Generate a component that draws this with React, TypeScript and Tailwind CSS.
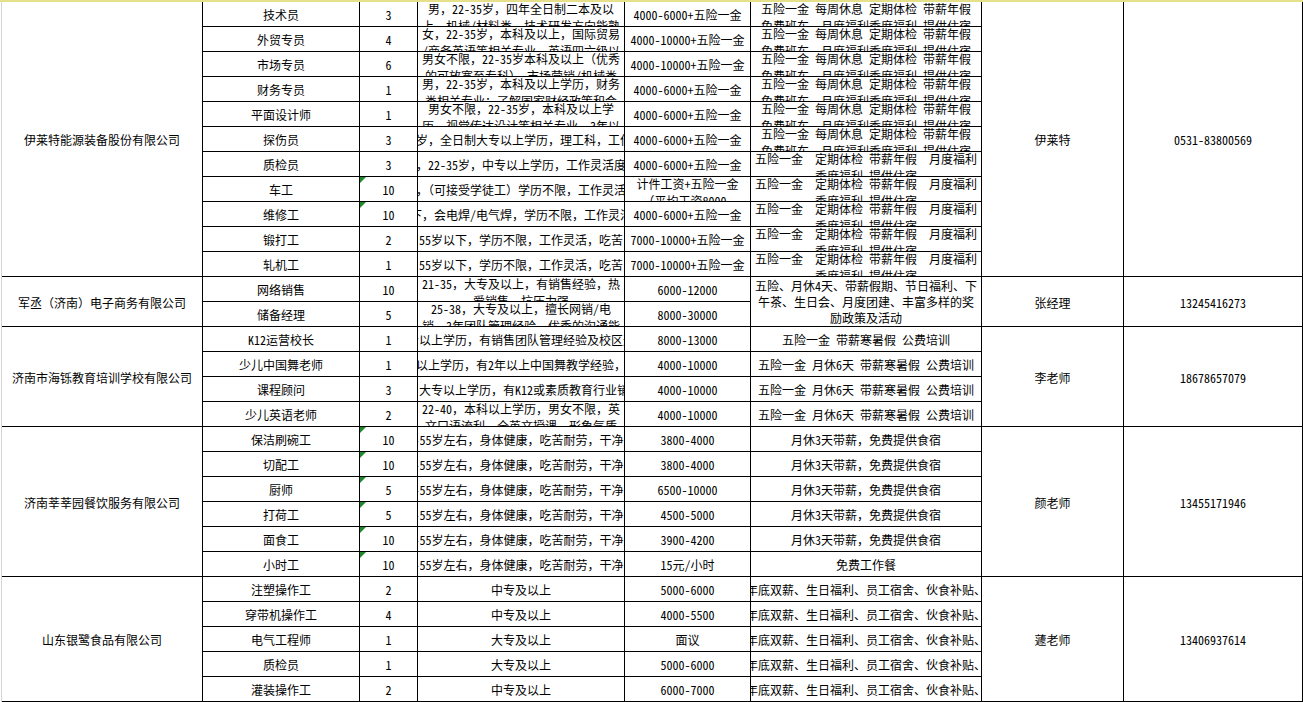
import React from "react"

type Cell =
  | string
  | { left: string }
  | { nudge: string }
  | { wrap: string[] }
  | { block: string[] }

interface Job {
  title: string
  count: string
  req: Cell
  salary: Cell
  benefit?: Cell
  mark?: boolean
}

interface Company {
  name: string
  contact: string
  phone: string
  benefit?: Cell
  jobs: Job[]
}

const SP = "\u2002"

const benefitA: Cell = {
  wrap: [`五险一金${SP}每周休息${SP}定期体检${SP}带薪年假`, `免费班车${SP}${SP}月度福利季度福利${SP}提供住宿`],
}
const benefitB: Cell = {
  wrap: [`五险一金${SP}${SP}定期体检${SP}带薪年假${SP}${SP}月度福利`, `季度福利${SP}提供住宿`],
}
const teach = `五险一金${SP}月休6天${SP}带薪寒暑假${SP}公费培训`
const food: Cell = { nudge: "18-55岁左右，身体健康，吃苦耐劳，干净卫生" }
const yinlu = "年底双薪、生日福利、员工宿舍、伙食补贴、"

const companies: Company[] = [
  {
    name: "伊莱特能源装备股份有限公司",
    contact: "伊莱特",
    phone: "0531-83800569",
    jobs: [
      { title: "技术员", count: "3", req: { wrap: ["男，22-35岁，四年全日制二本及以", "上，机械/材料类，技术研发方向能熟"] }, salary: "4000-6000+五险一金", benefit: benefitA },
      { title: "外贸专员", count: "4", req: { wrap: ["女，22-35岁，本科及以上，国际贸易", "/商务英语等相关专业，英语四六级以"] }, salary: "4000-10000+五险一金", benefit: benefitA },
      { title: "市场专员", count: "6", req: { wrap: ["男女不限，22-35岁本科及以上（优秀", "的可放宽至专科），市场营销/机械类"] }, salary: "4000-10000+五险一金", benefit: benefitA },
      { title: "财务专员", count: "1", req: { wrap: ["男，22-35岁，本科及以上学历，财务", "类相关专业；了解国家财经政策和会"] }, salary: "4000-6000+五险一金", benefit: benefitA },
      { title: "平面设计师", count: "1", req: { wrap: ["男女不限，22-35岁，本科及以上学", "历，视觉传达设计等相关专业，3年以"] }, salary: "4000-6000+五险一金", benefit: benefitA },
      { title: "探伤员", count: "3", req: "男，22-35岁，全日制大专以上学历，理工科，工作经验优先", salary: "4000-6000+五险一金", benefit: benefitA },
      { title: "质检员", count: "3", req: "男，22-35岁，中专以上学历，工作灵活度高", salary: "4000-6000+五险一金", benefit: benefitB },
      { title: "车工", count: "10", mark: true, req: "55岁以下，（可接受学徒工）学历不限，工作灵活，能吃苦", salary: { wrap: ["计件工资+五险一金", "（平均工资8000-"] }, benefit: benefitB },
      { title: "维修工", count: "10", mark: true, req: "55岁以下，会电焊/电气焊，学历不限，工作灵活，吃苦", salary: "4000-6000+五险一金", benefit: benefitB },
      { title: "锻打工", count: "2", req: "55岁以下，学历不限，工作灵活，吃苦", salary: "7000-10000+五险一金", benefit: benefitB },
      { title: "轧机工", count: "1", req: "55岁以下，学历不限，工作灵活，吃苦", salary: "7000-10000+五险一金", benefit: benefitB },
    ],
  },
  {
    name: "军丞（济南）电子商务有限公司",
    contact: "张经理",
    phone: "13245416273",
    benefit: { block: ["五险、月休4天、带薪假期、节日福利、下", "午茶、生日会、月度团建、丰富多样的奖", "励政策及活动"] },
    jobs: [
      { title: "网络销售", count: "10", req: { wrap: ["21-35，大专及以上，有销售经验，热", "爱销售，抗压力强"] }, salary: "6000-12000" },
      { title: "储备经理", count: "5", req: { wrap: ["25-38，大专及以上，擅长网销/电", "销，3年团队管理经验，优秀的沟通能"] }, salary: "8000-30000" },
    ],
  },
  {
    name: "济南市海铄教育培训学校有限公司",
    contact: "李老师",
    phone: "18678657079",
    jobs: [
      { title: "K12运营校长", count: "1", req: "大专以上学历，有销售团队管理经验及校区运营", salary: "8000-13000", benefit: `五险一金${SP}带薪寒暑假${SP}公费培训` },
      { title: "少儿中国舞老师", count: "1", req: "大专以上学历，有2年以上中国舞教学经验，优先", salary: "4000-10000", benefit: teach },
      { title: "课程顾问", count: "3", req: { left: "大专以上学历，有K12或素质教育行业销售经验" }, salary: "4000-10000", benefit: teach },
      { title: "少儿英语老师", count: "2", req: { wrap: ["22-40，本科以上学历，男女不限，英", "文口语流利，全英文授课，形象气质"] }, salary: "4000-10000", benefit: teach },
    ],
  },
  {
    name: "济南莘莘园餐饮服务有限公司",
    contact: "颜老师",
    phone: "13455171946",
    jobs: [
      { title: "保洁刷碗工", count: "10", mark: true, req: food, salary: "3800-4000", benefit: "月休3天带薪，免费提供食宿" },
      { title: "切配工", count: "10", mark: true, req: food, salary: "3800-4000", benefit: "月休3天带薪，免费提供食宿" },
      { title: "厨师", count: "5", mark: true, req: food, salary: "6500-10000", benefit: "月休3天带薪，免费提供食宿" },
      { title: "打荷工", count: "5", mark: true, req: food, salary: "4500-5000", benefit: "月休3天带薪，免费提供食宿" },
      { title: "面食工", count: "10", mark: true, req: food, salary: "3900-4200", benefit: "月休3天带薪，免费提供食宿" },
      { title: "小时工", count: "10", mark: true, req: food, salary: "15元/小时", benefit: "免费工作餐" },
    ],
  },
  {
    name: "山东银鹭食品有限公司",
    contact: "蘧老师",
    phone: "13406937614",
    jobs: [
      { title: "注塑操作工", count: "2", req: "中专及以上", salary: "5000-6000", benefit: yinlu },
      { title: "穿带机操作工", count: "4", req: "中专及以上", salary: "4000-5500", benefit: yinlu },
      { title: "电气工程师", count: "1", req: "大专及以上", salary: "面议", benefit: yinlu },
      { title: "质检员", count: "1", req: "大专及以上", salary: "5000-6000", benefit: yinlu },
      { title: "灌装操作工", count: "2", req: "中专及以上", salary: "6000-7000", benefit: yinlu },
    ],
  },
]

const SPAN: Record<number, string> = {
  1: "",
  2: "row-span-2",
  4: "row-span-4",
  5: "row-span-5",
  6: "row-span-6",
  11: "row-span-11",
}

const base = "relative overflow-hidden min-w-0 border-r border-b border-black"

// half-width latin like the sheet's SimSun, CJK punctuation stays full width
function T({ s }: { s: string }) {
  const parts = s.split(/([\x21-\x7e]+)/)
  return (
    <>
      {parts.map((p, i) =>
        i % 2 === 1 ? (
          <span key={i} className="[font-feature-settings:'hwid']">{p}</span>
        ) : (
          <React.Fragment key={i}>{p}</React.Fragment>
        )
      )}
    </>
  )
}

function GridCell({ content, span = 1, mark }: { content: Cell; span?: number; mark?: boolean }) {
  const cls = `${base} ${SPAN[span]}`
  const flag = mark ? (
    <svg className="absolute left-0 top-0" width="6" height="6" viewBox="0 0 6 6">
      <path d="M0 0H6L0 6Z" fill="#1f8a2a" />
    </svg>
  ) : null

  if (typeof content === "string") {
    return (
      <div className={`${cls} flex items-center justify-center pt-[2px]`}>
        {flag}
        <span className="shrink-0 whitespace-nowrap"><T s={content} /></span>
      </div>
    )
  }
  if ("left" in content) {
    return (
      <div className={`${cls} flex items-center justify-start pt-[2px] pl-px`}>
        <span className="shrink-0 whitespace-nowrap"><T s={content.left} /></span>
      </div>
    )
  }
  if ("nudge" in content) {
    return (
      <div className={`${cls} flex items-center justify-center pt-[2px] pl-[7px]`}>
        <span className="shrink-0 whitespace-nowrap"><T s={content.nudge} /></span>
      </div>
    )
  }
  if ("wrap" in content) {
    return (
      <div className={`${cls} flex flex-col items-center`}>
        <div className="-mt-[2px] flex flex-col items-center leading-[17px]">
          {content.wrap.map((l, i) => (
            <div key={i} className="shrink-0 whitespace-nowrap"><T s={l} /></div>
          ))}
        </div>
      </div>
    )
  }
  return (
    <div className={`${cls} flex flex-col items-center justify-center pt-[1px] leading-[16px]`}>
      {content.block.map((l, i) => (
        <div key={i} className="shrink-0 whitespace-nowrap"><T s={l} /></div>
      ))}
    </div>
  )
}

export default function App() {
  return (
    <div className="w-[1303px] h-[702px] overflow-hidden bg-white text-black text-[12px] font-['Noto_Sans_CJK_SC',sans-serif]">
      <div className="h-[2px] bg-[#e6e08a]" />
      <div className="grid grid-cols-[2px_201px_157px_58px_207px_126px_231px_142px_179px] grid-rows-[repeat(28,25px)]">
        <div className="row-span-28 border-r border-[#d4d4d4]" />
        {companies.map((c) =>
          c.jobs.map((j, i) => {
            const n = c.jobs.length
            return (
              <React.Fragment key={c.name + i}>
                {i === 0 && <GridCell content={c.name} span={n} />}
                <GridCell content={j.title} />
                <GridCell content={j.count} mark={j.mark} />
                <GridCell content={j.req} />
                <GridCell content={j.salary} />
                {j.benefit && <GridCell content={j.benefit} />}
                {i === 0 && c.benefit && <GridCell content={c.benefit} span={n} />}
                {i === 0 && <GridCell content={c.contact} span={n} />}
                {i === 0 && <GridCell content={c.phone} span={n} />}
              </React.Fragment>
            )
          })
        )}
      </div>
    </div>
  )
}
